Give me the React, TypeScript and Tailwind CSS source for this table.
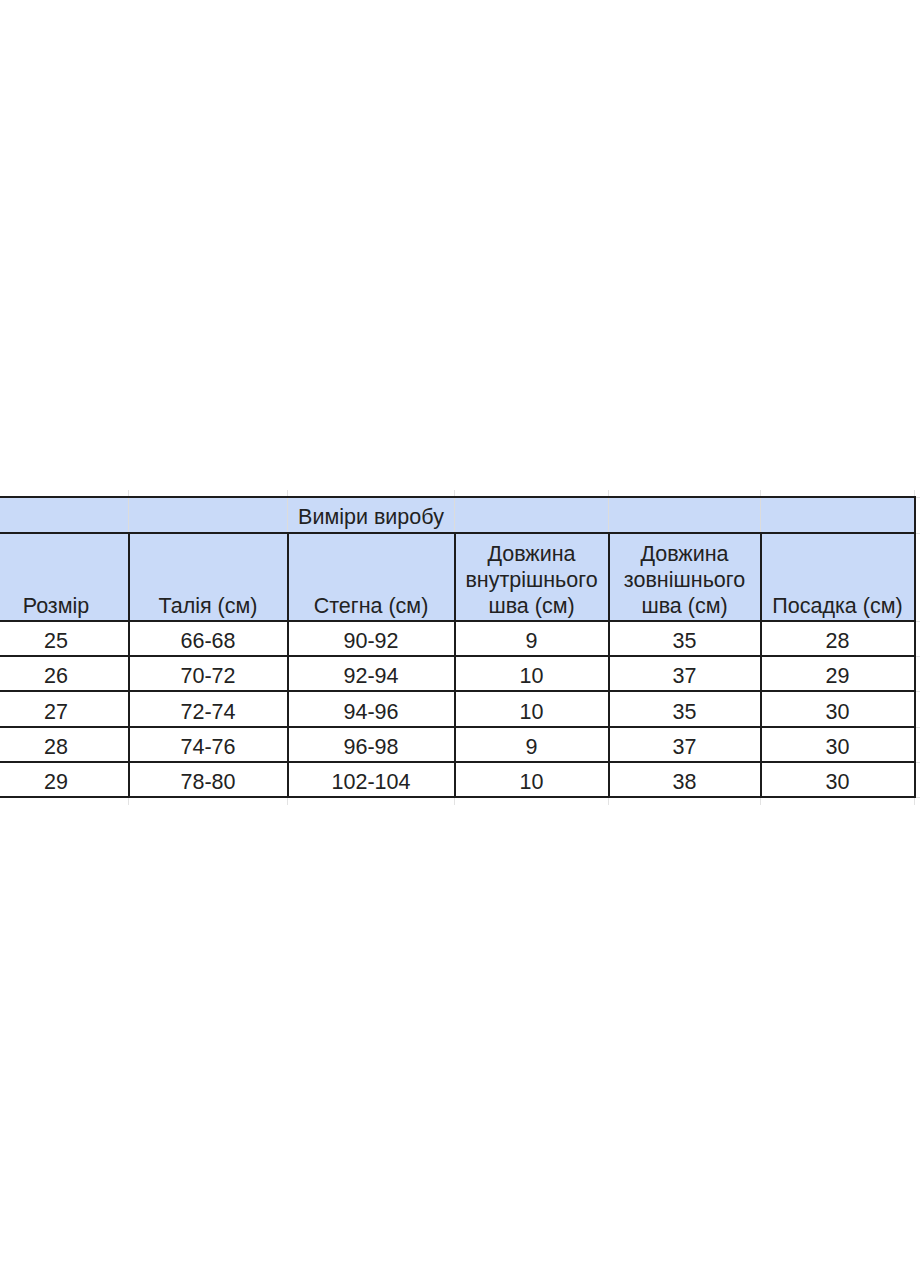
const rows = [
  ['25', '66-68', '90-92', '9', '35', '28'],
  ['26', '70-72', '92-94', '10', '37', '29'],
  ['27', '72-74', '94-96', '10', '35', '30'],
  ['28', '74-76', '96-98', '9', '37', '30'],
  ['29', '78-80', '102-104', '10', '38', '30'],
]

const heads: React.ReactNode[] = [
  'Розмір',
  'Талія (см)',
  'Стегна (см)',
  <>Довжина<br />внутрішнього<br />шва (см)</>,
  <>Довжина<br />зовнішнього<br />шва (см)</>,
  'Посадка (см)',
]

const rowHeights = ['h-[35px]', 'h-[35px]', 'h-[36px]', 'h-[35px]', 'h-[35px]']

export default function App() {
  return (
    <div className="min-h-screen overflow-hidden bg-white pt-[490px]">
      <table className="ml-[-16px] w-[950px] max-w-none table-fixed border-collapse font-['Liberation_Sans',Arial,sans-serif] text-[21.5px] leading-[26px] text-[#222]">
        <colgroup>
          <col className="w-[144px]" />
          <col className="w-[159px]" />
          <col className="w-[167px]" />
          <col className="w-[154px]" />
          <col className="w-[152px]" />
          <col className="w-[154px]" />
          <col className="w-[20px]" />
        </colgroup>
        <tbody>
          {/* spreadsheet gridlines above the table */}
          <tr className="h-[7px]">
            {Array.from({ length: 7 }).map((_, i) => (
              <td key={i} className="border-x border-[#e3e3e3] p-0" />
            ))}
          </tr>

          <tr className="h-[36px] bg-[#c9daf8]">
            {[0, 1, 2, 3, 4, 5].map(i => (
              <td
                key={i}
                className={`border-y-2 border-y-[#1c1c1c] px-1 pb-[2px] text-center align-bottom ${
                  i === 5 ? 'border-r-2 border-r-[#1c1c1c]' : 'border-r border-r-[#dcdcdc]'
                }`}
              >
                {i === 2 ? 'Виміри виробу' : ''}
              </td>
            ))}
            <td className="border-y border-[#e3e3e3] bg-white p-0" />
          </tr>

          <tr className="h-[88px] bg-[#c9daf8]">
            {heads.map((h, i) => (
              <td
                key={i}
                className="whitespace-nowrap border-b-2 border-r-2 border-[#1c1c1c] px-0 pb-[1px] text-center align-bottom"
              >
                {h}
              </td>
            ))}
            <td className="border-b border-[#e3e3e3] bg-white p-0" />
          </tr>

          {rows.map((r, ri) => (
            <tr key={ri} className={rowHeights[ri]}>
              {r.map((c, ci) => (
                <td
                  key={ci}
                  className="border-b-2 border-r-2 border-[#1c1c1c] px-1 pb-[1px] text-center align-bottom"
                >
                  {c}
                </td>
              ))}
              <td className="border-b border-[#e3e3e3] p-0" />
            </tr>
          ))}

          {/* gridlines below */}
          <tr className="h-[8px]">
            {Array.from({ length: 7 }).map((_, i) => (
              <td key={i} className="border-x border-[#e3e3e3] p-0" />
            ))}
          </tr>
        </tbody>
      </table>
    </div>
  )
}
